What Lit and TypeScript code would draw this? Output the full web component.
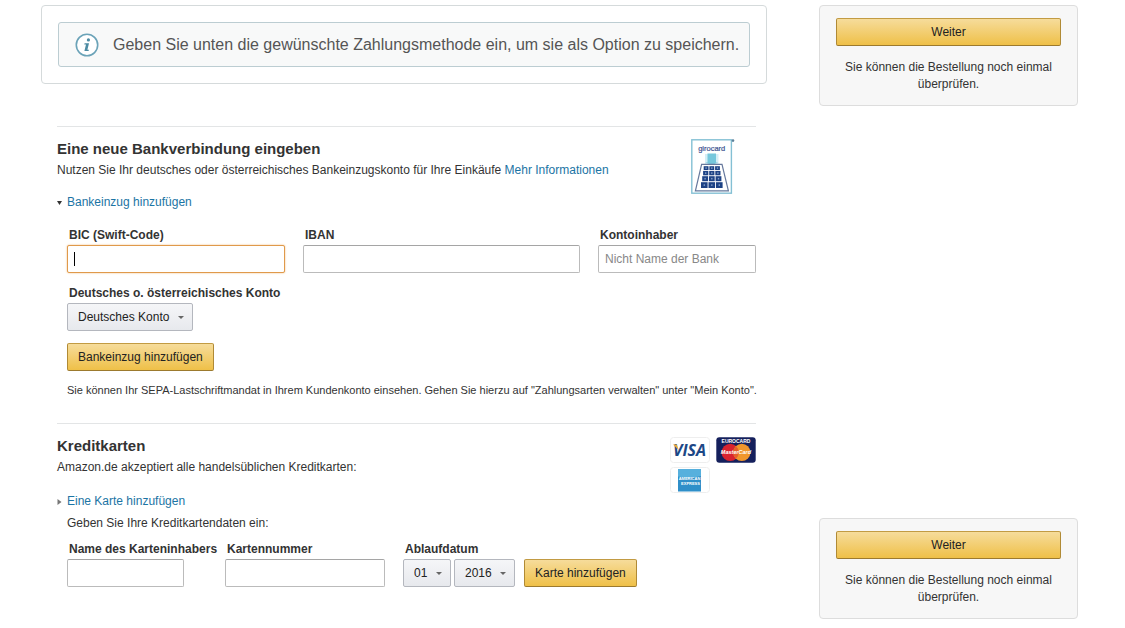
import { LitElement, html, css, svg } from "lit";
import { customElement, property, query } from "lit/decorators.js";

const controls = css`
  * {
    box-sizing: border-box;
  }
  button,
  input,
  select {
    font: inherit;
    margin: 0;
  }
  .gold {
    height: 28px;
    padding: 0 10px;
    border: 1px solid;
    border-color: #c29b43 #b08a35 #9c7a2e;
    border-radius: 2px;
    background: linear-gradient(#f6dc9b, #efc048);
    color: #222;
    white-space: nowrap;
    cursor: pointer;
  }
`;

@customElement("continue-card")
class ContinueCard extends LitElement {
  static styles = [
    controls,
    css`
      :host {
        display: block;
      }
      .card {
        padding: 12px 16px;
        border: 1px solid #ddd;
        border-radius: 4px;
        background: #f7f7f7;
        text-align: center;
      }
      .gold {
        width: 100%;
      }
      .hint {
        margin: 13px 0 0;
        line-height: 17px;
      }
    `,
  ];

  render() {
    return html`
      <div class="card">
        <button class="gold" type="button">Weiter</button>
        <p class="hint">Sie können die Bestellung noch einmal überprüfen.</p>
      </div>
    `;
  }
}

@customElement("drop-down")
class DropDown extends LitElement {
  @property() name = "";
  @property() label = "";
  @property({ type: Array }) options: string[] = [];

  static styles = [
    controls,
    css`
      :host {
        display: inline-grid;
      }
      .select,
      .arrow {
        grid-area: 1 / 1;
      }
      .select {
        appearance: none;
        height: 28px;
        padding: 0 22px 0 10px;
        border: 1px solid #b4b7be;
        border-radius: 2px;
        background: linear-gradient(#f5f6f8, #e7e9ed);
        color: #222;
      }
      .arrow {
        align-self: center;
        justify-self: end;
        margin-right: 9px;
        border: 3px solid transparent;
        border-top-color: #666;
        border-bottom: 0;
        pointer-events: none;
      }
    `,
  ];

  render() {
    return html`
      <select class="select" name=${this.name} aria-label=${this.label}>
        ${this.options.map((o) => html`<option>${o}</option>`)}
      </select>
      <span class="arrow"></span>
    `;
  }
}

const infoIcon = html`
  <svg class="info-icon" width="24" height="24" viewBox="0 0 24 24" aria-hidden="true">
    <circle cx="12" cy="12" r="10.7" fill="#fff" stroke="#6ba3b8" stroke-width="1.6" />
    <circle cx="13.4" cy="6.9" r="1.6" fill="#4c8ba3" />
    <path d="M9.6 10.2h4.4l-1.6 6.6h1.5l-.3 1.2h-4.2l1.6-6.6H9.3z" fill="#4c8ba3" />
  </svg>
`;

const keyRows = [
  { y: 27.2, h: 3.8, w: 4.8 },
  { y: 31.9, h: 4.4, w: 5.2 },
  { y: 37.2, h: 5, w: 5.8 },
  { y: 43.2, h: 5.8, w: 6.6 },
];

const girocard = html`
  <svg width="44" height="55" viewBox="0 0 44 55" role="img" aria-label="girocard">
    <rect x="0.8" y="0.8" width="39.6" height="53.4" fill="#fff" stroke="#84c0d4" stroke-width="1.4" />
    <circle cx="42" cy="1.6" r="1.3" fill="#5c7f99" />
    <text x="20.7" y="12" text-anchor="middle" font-size="7.5" fill="#3c5290" stroke="#3c5290" stroke-width="0.2">girocard</text>
    <path d="M14 15h13.500v10h-13.500z" fill="#d4eef6" />
    <path d="M16.500 14.500h8.500v9h2.2l-6.500 2.500-6.500-2.500h2.300z" fill="#76c7dc" />
    <path d="M10.6 25.4h20.400L37.4 51.800H4.400z" fill="#fff" stroke="#66789c" stroke-width="1.2" />
    ${keyRows.map(
      (r) => svg`${[-1, 0, 1].map(
        (c) => svg`<rect x=${20.8 + c * (r.w + 0.9) - r.w / 2} y=${r.y} width=${r.w} height=${r.h} fill="#1d4285" />
          <rect x=${20.8 + c * (r.w + 0.9) - 0.7} y=${r.y + r.h / 2 - 0.8} width="1.4" height="1.6" fill="#7f9cc6" />`
      )}`
    )}
  </svg>
`;

const visa = html`
  <svg width="40" height="26" viewBox="0 0 40 26" role="img" aria-label="VISA">
    <rect x="0.5" y="0.5" width="39" height="25" rx="3" fill="#fff" stroke="#eee" />
    <text x="19.5" y="19.2" text-anchor="middle" font-size="16" font-weight="bold" font-style="italic" font-family="Open Sans, sans-serif" fill="#1c4886">VISA</text>
    <path d="M3 7.600h3.800l2 5.600z" fill="#e6a93c" />
  </svg>
`;

const mastercard = html`
  <svg width="40" height="26" viewBox="0 0 40 26" role="img" aria-label="Eurocard MasterCard">
    <rect x="0.3" y="0.3" width="39.4" height="25.4" rx="3" fill="#15205c" />
    <text x="20" y="5.8" text-anchor="middle" font-size="5" font-weight="bold" fill="#fff">EUROCARD</text>
    <circle cx="14.2" cy="15.4" r="8.6" fill="#d8232f" />
    <circle cx="25.8" cy="15.4" r="8.6" fill="#f0962c" />
    <path d="M20 9.1a8.6 8.6 0 0 1 0 12.6a8.6 8.6 0 0 1 0-12.6z" fill="#e4602c" />
    <text x="20" y="17.4" text-anchor="middle" font-size="5.5" font-weight="bold" font-style="italic" fill="#fff">MasterCard</text>
  </svg>
`;

const amex = html`
  <svg width="40" height="26" viewBox="0 0 40 26" role="img" aria-label="American Express">
    <rect x="0.5" y="0.5" width="39" height="25" rx="3" fill="#fff" stroke="#eee" />
    <rect x="8" y="2" width="23" height="22.5" fill="#2f8fc9" />
    <path d="M8 2h23v7L19.500 11.500 8 9.500z" fill="#57b0dd" />
    <text x="19.5" y="12.5" text-anchor="middle" font-size="4" font-weight="bold" fill="#fff">AMERICAN</text>
    <text x="20.5" y="17.5" text-anchor="middle" font-size="4" font-weight="bold" fill="#fff">EXPRESS</text>
  </svg>
`;

@customElement("app-root")
class AppRoot extends LitElement {
  @query("#bic") bic!: HTMLInputElement;

  static styles = [
    controls,
    css`
      :host {
        display: block;
        background: #fff;
        color: #333;
        font: 12px/17px "Liberation Sans", Arial, sans-serif;
      }
      .page {
        display: grid;
        grid-template-columns: minmax(0, 1fr) 259px;
        gap: 52px;
        padding: 5px 47px 9px 41px;
      }
      .side {
        display: flex;
        flex-direction: column;
        justify-content: space-between;
      }
      .notice {
        padding: 16px;
        border: 1px solid #d5dadb;
        border-radius: 4px;
      }
      .notice-inner {
        display: flex;
        align-items: center;
        gap: 14px;
        min-height: 45px;
        padding: 0 0 0 16px;
        border: 1px solid #bccdd2;
        border-radius: 3px;
        background: #f8f9f9;
        color: #555;
        font-size: 16px;
      }
      .info-icon {
        flex: none;
      }
      .content {
        padding: 42px 11px 32px 16px;
      }
      .section {
        border-top: 1px solid #e3e5e6;
      }
      .section + .section {
        margin-top: 24px;
      }
      .head {
        display: flex;
        justify-content: space-between;
        align-items: flex-start;
      }
      .title {
        margin: 12px 0 3px;
        font-size: 15px;
        line-height: 20px;
        font-weight: bold;
      }
      .text {
        margin: 0;
      }
      a {
        color: #1b74a4;
        text-decoration: none;
      }
      .giro {
        display: flex;
        margin: 12px 21px 0 0;
      }
      .cards {
        display: grid;
        grid-template-columns: 40px 40px;
        gap: 4px 6px;
        margin-top: 13px;
      }
      .expander {
        display: flex;
        align-items: center;
        gap: 5px;
      }
      .marker {
        width: 5px;
        height: 6px;
      }
      .body {
        padding-left: 10px;
      }
      .intro {
        margin: 5px 0 0;
      }
      .fields {
        display: grid;
        gap: 18px;
      }
      .bank {
        grid-template-columns: 218fr 277fr 158fr;
        margin-top: 16px;
      }
      .card-fields {
        grid-template-columns: 140px 160px 1fr;
        margin-top: 9px;
      }
      .field {
        display: flex;
        flex-direction: column;
        align-items: flex-start;
        min-width: 0;
      }
      .label {
        padding: 0 0 1px 2px;
        font-weight: bold;
        white-space: nowrap;
      }
      .input {
        width: 100%;
        height: 28px;
        padding: 0 6px;
        border: 1px solid #bbb;
        border-top-color: #a5a5a5;
        border-radius: 2px;
        background: #fff;
        color: #111;
        outline: none;
      }
      .input::placeholder {
        color: #888;
      }
      .input:focus {
        border-color: #e09a4b;
        box-shadow: 0 0 2px #f0b878;
      }
      .input:focus:placeholder-shown {
        background: linear-gradient(#000, #000) 6px 50% / 1px 14px no-repeat #fff;
      }
      .holder {
        width: 117px;
      }
      .account {
        margin-top: 12px;
      }
      .add {
        margin-top: 12px;
      }
      .mandate {
        margin: 11px 0 0;
        font-size: 11px;
        white-space: nowrap;
      }
      .expiry {
        display: flex;
        gap: 3px;
      }
      .add-card {
        margin-left: 6px;
      }
    `,
  ];

  firstUpdated() {
    this.bic.focus();
  }

  render() {
    return html`
      <div class="page">
        <main>
          <div class="notice">
            <div class="notice-inner">
              ${infoIcon}
              <span>Geben Sie unten die gewünschte Zahlungsmethode ein, um sie als Option zu speichern.</span>
            </div>
          </div>
          <div class="content">
            <section class="section">
              <div class="head">
                <div>
                  <h2 class="title">Eine neue Bankverbindung eingeben</h2>
                  <p class="text">
                    Nutzen Sie Ihr deutsches oder österreichisches Bankeinzugskonto für Ihre Einkäufe
                    <a href="#info">Mehr Informationen</a>
                  </p>
                </div>
                <div class="giro">${girocard}</div>
              </div>
              <div class="expander">
                <svg class="marker" viewBox="0 0 5 6" aria-hidden="true"><path d="M0 1h5L2.500 5z" fill="#333" /></svg>
                <a href="#bank">Bankeinzug hinzufügen</a>
              </div>
              <div class="body">
                <div class="fields bank">
                  <div class="field">
                    <label class="label" for="bic">BIC (Swift-Code)</label>
                    <input class="input" id="bic" type="text" placeholder=" " />
                  </div>
                  <div class="field">
                    <label class="label" for="iban">IBAN</label>
                    <input class="input" id="iban" type="text" />
                  </div>
                  <div class="field">
                    <label class="label" for="owner">Kontoinhaber</label>
                    <input class="input" id="owner" type="text" placeholder="Nicht Name der Bank" />
                  </div>
                </div>
                <div class="field account">
                  <span class="label">Deutsches o. österreichisches Konto</span>
                  <drop-down
                    name="country"
                    label="Deutsches o. österreichisches Konto"
                    .options=${["Deutsches Konto"]}
                  ></drop-down>
                </div>
                <button class="gold add" type="button">Bankeinzug hinzufügen</button>
                <p class="mandate">
                  Sie können Ihr SEPA-Lastschriftmandat in Ihrem Kundenkonto einsehen. Gehen Sie hierzu auf
                  "Zahlungsarten verwalten" unter "Mein Konto".
                </p>
              </div>
            </section>

            <section class="section">
              <div class="head">
                <div>
                  <h2 class="title">Kreditkarten</h2>
                  <p class="text">Amazon.de akzeptiert alle handelsüblichen Kreditkarten:</p>
                </div>
                <div class="cards">${visa}${mastercard}${amex}</div>
              </div>
              <div class="expander">
                <svg class="marker" viewBox="0 0 5 6" aria-hidden="true"><path d="M.5 0v6L4.500 3z" fill="#777" /></svg>
                <a href="#card">Eine Karte hinzufügen</a>
              </div>
              <div class="body">
                <p class="intro">Geben Sie Ihre Kreditkartendaten ein:</p>
                <div class="fields card-fields">
                  <div class="field">
                    <label class="label" for="holder">Name des Karteninhabers</label>
                    <input class="input holder" id="holder" type="text" />
                  </div>
                  <div class="field">
                    <label class="label" for="number">Kartennummer</label>
                    <input class="input" id="number" type="text" />
                  </div>
                  <div class="field">
                    <span class="label">Ablaufdatum</span>
                    <div class="expiry">
                      <drop-down name="month" label="Monat" .options=${["01"]}></drop-down>
                      <drop-down name="year" label="Jahr" .options=${["2016"]}></drop-down>
                      <button class="gold add-card" type="button">Karte hinzufügen</button>
                    </div>
                  </div>
                </div>
              </div>
            </section>
          </div>
        </main>
        <aside class="side">
          <continue-card></continue-card>
          <continue-card></continue-card>
        </aside>
      </div>
    `;
  }
}
